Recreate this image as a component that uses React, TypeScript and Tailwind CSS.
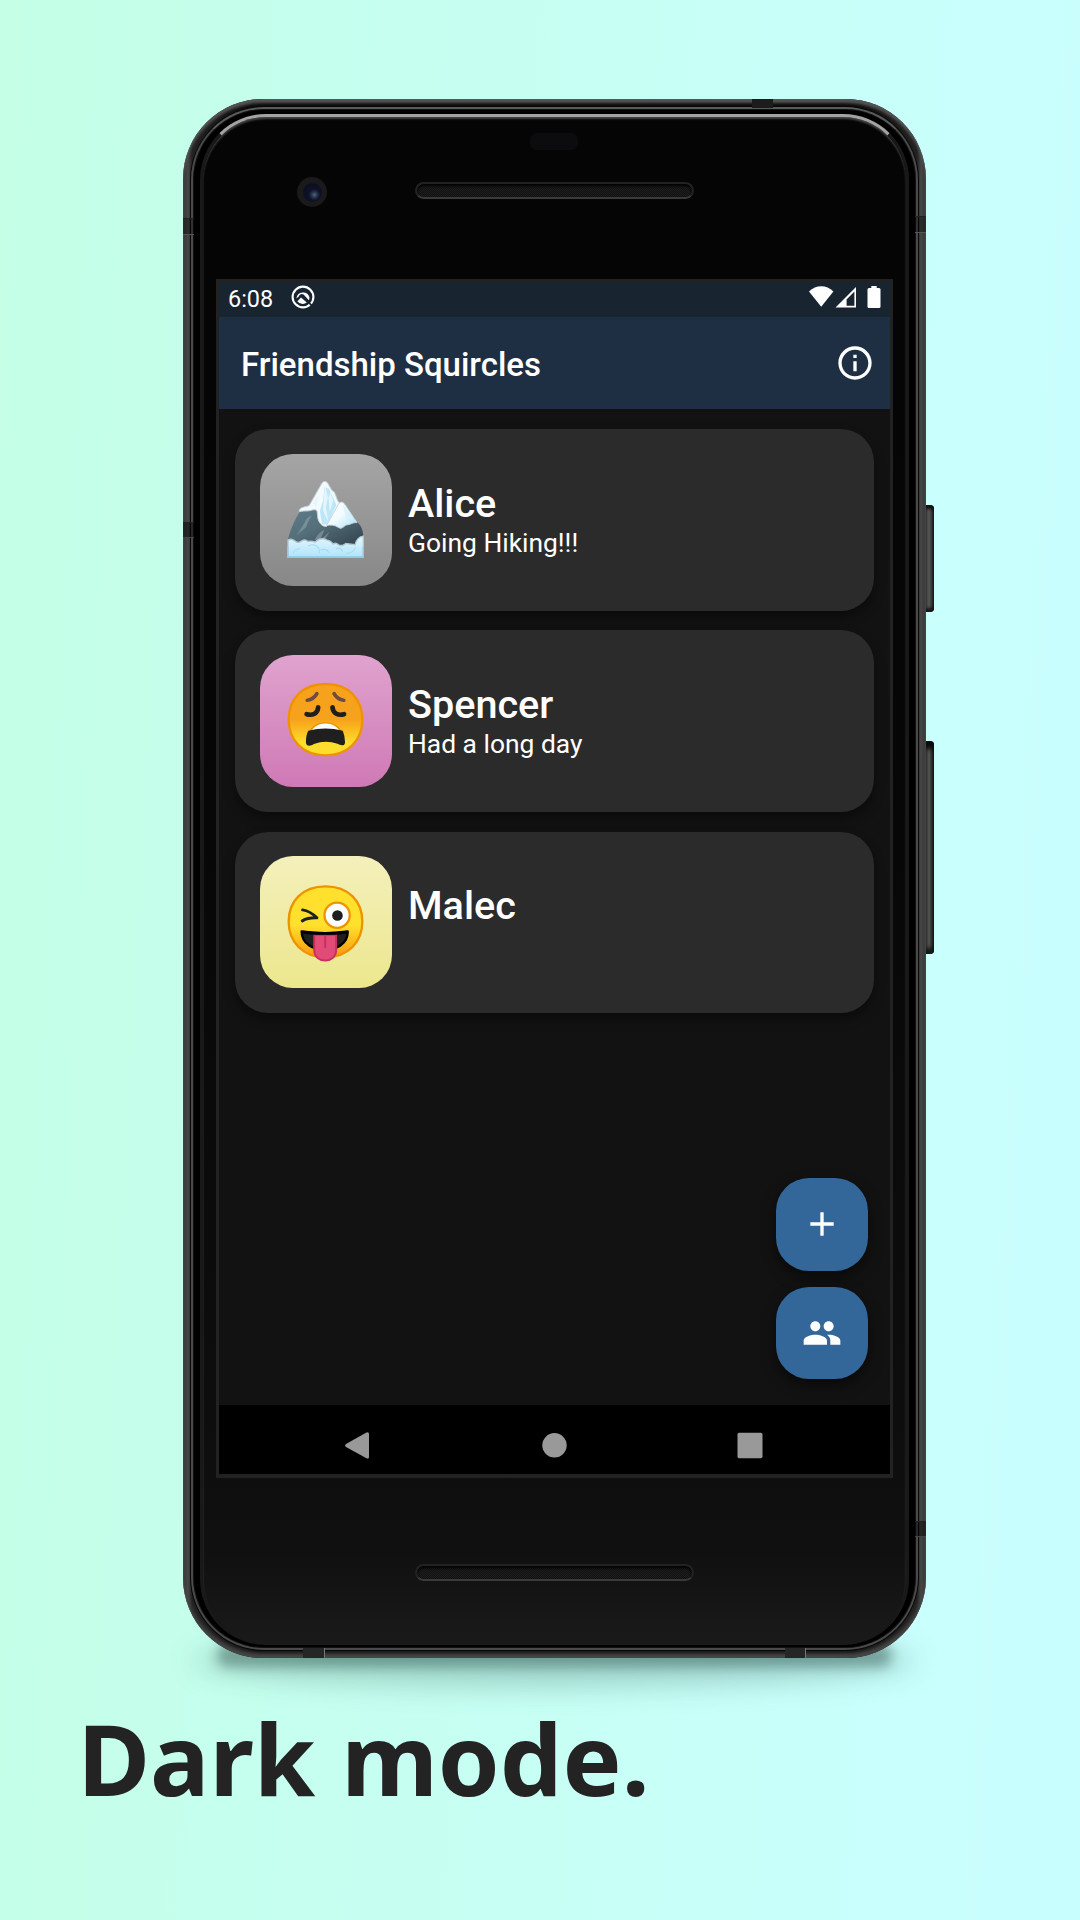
import React from "react";

function StudioIcon() {
  return (
    <svg viewBox="0 0 24 24" className="h-6 w-6" fill="none">
      <circle cx="12" cy="12" r="10.4" stroke="#fff" strokeWidth="2.1" />
      <path d="M5.4 13.4 A6.7 6.7 0 0 1 18.5 12.4 Q18.5 14 17.8 15.2 L12.6 9.6 C10.6 8.2 8.4 9.4 7.8 11.4 Z" fill="#fff" />
      <path d="M6.4 16.2 L10 12.6 L15.8 17.6 A6.8 6.8 0 0 1 6.4 16.2 Z" fill="#fff" />
      <path d="M11.2 11 L20.6 20.4" stroke="#182430" strokeWidth="1.7" />
    </svg>
  );
}

function Mountain() {
  return (
    <svg viewBox="0 0 230 232" className="h-[77px] w-[77px]">
      <defs>
        <linearGradient id="rock" x1="0" y1="0" x2="1" y2="1">
          <stop offset="0" stopColor="#607d8b" />
          <stop offset=".45" stopColor="#546e7a" />
          <stop offset="1" stopColor="#2f4049" />
        </linearGradient>
        <linearGradient id="ice" x1="0" y1="0" x2="0" y2="1">
          <stop offset="0" stopColor="#e4f6fd" />
          <stop offset="1" stopColor="#b0e4fa" />
        </linearGradient>
        <linearGradient id="peak" x1="0" y1="0" x2="1" y2="1">
          <stop offset="0" stopColor="#fff" />
          <stop offset=".5" stopColor="#f2fbff" />
          <stop offset="1" stopColor="#a5e0fa" />
        </linearGradient>
      </defs>
      <path d="M2 176 C8 150 22 116 38 92 L92 80 L115 130 L208 122 C220 130 230 146 229 176 L229 196 L2 196 Z" fill="url(#rock)" />
      <path d="M36 92 C34 78 58 78 66 74 L104 7 Q113 -5 122 7 L134 28 L142 34 L152 60 L166 76 L150 90 L118 137 C104 138 94 124 92 112 L90 94 C90 82 74 88 64 90 Q48 90 36 92Z" fill="#f3fafd" stroke="#c2d0d6" strokeWidth="3" />
      <path d="M112 18 L108 58 L98 90 L104 130 L120 132 L148 72 L126 24Z" fill="#bde6f9" />
      <path d="M114 12 L122 50 L116 80 L124 124 L108 90 L110 50Z M130 34 L138 60 L128 92 L124 50Z M78 66 L92 44 L88 80Z" fill="#e4f6fd" />
      <path d="M118 134 L154 70 Q163 57 173 70 L202 114 L210 125 C196 124 190 132 180 132 C172 132 166 148 154 140 C142 132 132 132 118 134Z" fill="url(#peak)" stroke="#c2d8e2" strokeWidth="3" />
      <path d="M166 68 L198 114 L180 120Z" fill="#d2effc" opacity=".7" />
      <path d="M52 126 Q58 108 74 104 Q62 120 56 140 Q42 150 28 164Z M82 178 Q92 156 112 146 L100 176Z M106 172 L128 152 L112 178Z" fill="#8da2ab" opacity=".6" />
      <path d="M2 178 Q12 172 22 180 Q32 190 44 180 Q54 174 62 182 Q74 180 84 184 Q100 168 120 178 Q132 180 138 190 Q146 184 154 192 Q164 198 176 188 Q190 190 204 192 Q210 168 229 166 L229 230 L2 230Z" fill="url(#ice)" stroke="#b3c6ce" strokeWidth="4" />
      <path d="M18 218 Q20 206 38 204 M62 196 Q84 186 94 202 M94 200 Q98 212 96 218 M100 208 Q118 202 126 216 M146 204 Q160 198 166 212 M178 218 Q198 218 206 200" fill="none" stroke="#a3dcf4" strokeWidth="3.5" />
      <path d="M1 198 V229 H229 V198" fill="none" stroke="#8fc9e2" strokeWidth="4" />
    </svg>
  );
}

function Weary() {
  return (
    <svg viewBox="0 0 230 232" className="h-[77px] w-[77px]">
      <defs>
        <linearGradient id="weary" x1="0" y1="0" x2="0" y2="1">
          <stop offset=".5" stopColor="#f7a21c" />
          <stop offset=".62" stopColor="#fab720" />
          <stop offset=".82" stopColor="#fede2d" />
        </linearGradient>
      </defs>
      <path d="M115 6 C185 6 226 51 226 114 C226 175 184 221 115 221 C46 221 4 175 4 114 C4 51 45 6 115 6Z" fill="url(#weary)" stroke="#ee9300" strokeWidth="7" />
      <path d="M60 55 Q80 52 89 35" stroke="#6d4c41" strokeWidth="11" strokeLinecap="round" fill="none" />
      <path d="M141 35 Q150 52 170 55" stroke="#6d4c41" strokeWidth="11" strokeLinecap="round" fill="none" />
      <path d="M58 97 C76 102 92 95 93 76 M171 97 C154 102 137 95 136 76" stroke="#1f1f1f" strokeWidth="14" strokeLinecap="round" fill="none" />
      <path d="M64 154 C76 110 154 110 166 154" fill="#ee9300" />
      <path d="M71 152 C84 116 146 116 159 152Z" fill="#fff" />
      <path d="M63 147 Q115 133 167 147 Q174 164 174 182 C173 194 160 191 151 186 Q115 174 80 187 C69 194 57 194 56 182 Q56 160 63 147Z" fill="#1f1f1f" />
    </svg>
  );
}

function Zany() {
  return (
    <svg viewBox="0 0 230 232" className="h-[77px] w-[77px]">
      <defs>
        <linearGradient id="zany" x1="0" y1="0" x2="0" y2="1">
          <stop offset=".55" stopColor="#ffe02d" />
          <stop offset=".75" stopColor="#fcc21b" />
          <stop offset="1" stopColor="#f6941d" />
        </linearGradient>
      </defs>
      <path d="M115 4 C185 4 226 49 226 110 C226 171 184 218 115 218 C46 218 4 171 4 110 C4 49 45 4 115 4Z" fill="url(#zany)" stroke="#ee9300" strokeWidth="7" />
      <circle cx="150" cy="91" r="38" fill="#fff" stroke="#ee9300" strokeWidth="7" />
      <circle cx="151" cy="92" r="16" fill="#1f1f1f" />
      <path d="M46 75 Q68 78 89 99 Q62 98 45 108" fill="none" stroke="#1f1f1f" strokeWidth="9" strokeLinecap="round" strokeLinejoin="round" />
      <path d="M43 140 Q115 150 182 140 C183 214 44 214 43 140Z" fill="#1f1f1f" stroke="#000" strokeWidth="7" strokeLinejoin="round" />
      <path d="M81 150 H147 V196 C147 238 81 238 81 196Z" fill="#e24b78" stroke="#c9305c" strokeWidth="6" />
      <path d="M46 142 Q115 151 180 142" stroke="#000" strokeWidth="9" fill="none" />
      <path d="M114 150 V190" stroke="#c4335b" strokeWidth="6" />
    </svg>
  );
}

const friends = [
  { name: "Alice", status: "Going Hiking!!!", art: <Mountain />, tile: "from-[#a5a5a5] to-[#888888]" },
  { name: "Spencer", status: "Had a long day", art: <Weary />, tile: "from-[#dfa3ce] to-[#cf79b6]" },
  { name: "Malec", status: "", art: <Zany />, tile: "pt-[3px] from-[#f4f0bb] to-[#ece78d]" },
];

function StatusBar() {
  return (
    <div className="flex h-[35px] items-center bg-[#182430] pl-[9px] pr-[9px] text-white">
      <span className="text-[23.4px] leading-none">6:08</span>
      <span className="-mt-[5px] ml-[18px]"><StudioIcon /></span>
      <svg viewBox="0 0 72 22" className="mb-[6px] ml-auto h-[22px] w-[72px]">
        <path d="M0 5.5 C7-1.6 17.5-1.6 24.4 5.5 L12.2 20.7Z" fill="#fff" />
        <path d="M26.5 21.4 L47 1 V21.4Z" fill="#fff" />
        <path d="M37.6 13.4 L45.4 5.6 V19.8 H37.6Z" fill="#182430" />
        <rect x="58.5" y="2" width="13" height="20" rx="1.5" fill="#fff" />
        <rect x="62.3" y="0" width="5.4" height="3" fill="#fff" />
      </svg>
    </div>
  );
}

function AppBar() {
  return (
    <div className="flex h-[92px] items-center justify-between bg-[#1e2f44] pl-[22px] pr-[15.5px] text-white">
      <h1 className="pt-[3px] text-[33px] font-medium leading-none">Friendship Squircles</h1>
      <svg viewBox="0 0 24 24" className="h-10 w-10" fill="#fff">
        <path d="M11 7h2v2h-2zm0 4h2v6h-2zm1-9C6.48 2 2 6.48 2 12s4.48 10 10 10 10-4.48 10-10S17.52 2 12 2zm0 18c-4.41 0-8-3.59-8-8s3.59-8 8-8 8 3.59 8 8-3.59 8-8 8z" />
      </svg>
    </div>
  );
}

function Screen() {
  return (
    <div className="mx-auto flex h-[1199px] w-[677px] flex-col border-[3px] border-b-4 border-[#222222] bg-[#121212]">
      <StatusBar />
      <AppBar />
      <div className="relative h-[996px] px-4 pt-5">
        <div className="flex flex-col gap-[19.7px]">
          {friends.map((f) => (
            <div key={f.name} className="flex h-[181.6px] rounded-[33px] bg-[#2b2b2b] pl-[24.5px] pt-[24.5px] shadow-[0_6px_12px_rgba(0,0,0,0.4)]">
              <div className={"flex h-[132px] w-[132px] items-center justify-center rounded-[33px] bg-linear-to-b pr-px " + f.tile}>
                {f.art}
              </div>
              <div className="ml-[16.5px] pt-[26px] text-white">
                <div className="text-[39.6px] font-medium leading-[47px]">{f.name}</div>
                <div className="text-[26.4px] leading-[32px]">{f.status}</div>
              </div>
            </div>
          ))}
        </div>
        <div className="absolute bottom-[26px] right-[22px] flex flex-col gap-4">
          <button className="flex h-[92.5px] w-[92.5px] items-center justify-center rounded-[33px] bg-[#336699] shadow-[0_6px_14px_rgba(0,0,0,0.5)]">
            <svg viewBox="0 0 24 24" className="h-10 w-10" fill="#fff"><path d="M19 13h-6v6h-2v-6H5v-2h6V5h2v6h6v2z" /></svg>
          </button>
          <button className="flex h-[92.5px] w-[92.5px] items-center justify-center rounded-[33px] bg-[#336699] shadow-[0_6px_14px_rgba(0,0,0,0.5)]">
            <svg viewBox="0 0 24 24" className="h-10 w-10" fill="#fff"><path d="M16 11c1.66 0 2.99-1.34 2.99-3S17.66 5 16 5c-1.66 0-3 1.34-3 3s1.34 3 3 3zm-8 0c1.66 0 2.99-1.34 2.99-3S9.66 5 8 5C6.34 5 5 6.34 5 8s1.34 3 3 3zm0 2c-2.33 0-7 1.17-7 3.5V19h14v-2.5c0-2.33-4.67-3.5-7-3.5zm8 0c-.29 0-.62.02-.97.05 1.16.84 1.97 1.97 1.97 3.45V19h6v-2.5c0-2.33-4.67-3.5-7-3.5z" /></svg>
          </button>
        </div>
      </div>
      <div className="flex h-[69px] items-center bg-black pl-[126px] pt-[11px]">
        <svg viewBox="0 0 418 27" className="h-[27px] w-[418px]" fill="#999">
          <path d="M1 12 L21 0.7 Q24 -0.5 24 2 V25 Q24 27.5 21 26 L1 15 Q-0.8 13.5 1 12Z" />
          <circle cx="209.5" cy="13.3" r="12.2" />
          <rect x="392.5" y="0.8" width="25" height="25.4" rx="1.6" />
        </svg>
      </div>
    </div>
  );
}

function Speaker() {
  return (
    <div className="h-[17px] w-[279px] rounded-full border-2 border-[#222222] border-b-[#3a3a3a] bg-[repeating-conic-gradient(#1e1e1e_0_25%,#111111_0_50%)] bg-[length:2px_2px] shadow-[inset_0_2px_3px_#000]" />
  );
}

export default function App() {
  return (
    <div className="h-[1920px] w-[1080px] overflow-hidden bg-[linear-gradient(93deg,#c4ffe6_0%,#c5ffed_25%,#c7fff5_55%,#c9fffb_78%,#c9feff_100%)] pt-[99px] font-[Roboto,sans-serif]">
      <div className="relative ml-[183px] h-[1559px] w-[743px]">
        <div className="absolute bottom-[-28px] left-[10px] h-[50px] w-[723px] rounded-[50%] bg-[#1c4a44]/25 blur-[14px]" />
        <div className="absolute bottom-[-9px] left-[34px] h-[24px] w-[675px] rounded-full bg-[#24403d]/40 blur-[6px]" />
        <div className="absolute left-[741px] top-[406px] h-[107px] w-[10px] rounded-r-[4px] bg-linear-to-r from-[#2a2a2a] via-[#565656] to-[#222] shadow-[inset_0_4px_3px_#111,inset_0_-4px_3px_#181818]" />
        <div className="absolute left-[741px] top-[642px] h-[213px] w-[10px] rounded-r-[4px] bg-linear-to-r from-[#2a2a2a] via-[#565656] to-[#222] shadow-[inset_0_8px_4px_#0c0c0c,inset_0_-6px_4px_#181818]" />
        <div className="relative h-full rounded-[80px] bg-[linear-gradient(90deg,#303030_0,#484848_5px,#222_9px,#0c0c0c_70px,#0c0c0c_673px,#222_734px,#484848_738px,#303030_743px)] p-[8px] shadow-[inset_0_4px_3px_#555,inset_0_-5px_4px_#484848]">
          <div className="h-full rounded-[73px] border-2 border-[#4a4a4a] border-t-[#5a5a5a] bg-black px-[7px] pb-[3px] pt-[5px] shadow-[0_0_0_1px_#080808,inset_0_0_0_1px_#111]">
            <div className="h-full rounded-[66px] border-x-[3px] border-t-[3px] border-x-[#191919] border-t-[#a3a3a3] bg-[linear-gradient(180deg,#050505_0%,#060606_40%,#0d0d0d_85%,#101010_94%,#1a1a1a_100%)] shadow-[inset_0_2px_2px_#444]">
              <div className="relative flex h-[162px] justify-center pt-[65px]">
                <Speaker />
                <div className="absolute left-[327px] top-[16px] h-[17px] w-[48px] rounded-[7px] bg-[#0c0c0f]" />
                <div className="absolute left-[94px] top-[60px] flex h-[30px] w-[30px] items-center justify-center rounded-full bg-[#1a1a1a]">
                  <div className="h-[19px] w-[19px] rounded-full bg-[radial-gradient(circle_at_60%_62%,#52647a_0,#283850_16%,#0f1228_34%,#090b1a_100%)]" />
                </div>
              </div>
              <Screen />
              <div className="flex justify-center pt-[86px]">
                <Speaker />
              </div>
            </div>
          </div>
        </div>
        <div className="absolute left-0 top-[119px] h-[17px] w-[11px] border-y border-b-[#555] border-t-[#222] bg-black/35" />
        <div className="absolute left-0 top-[423px] h-[16px] w-[11px] border-y border-b-[#444] border-t-[#222] bg-black/45" />
        <div className="absolute right-0 top-[117px] h-[17px] w-[11px] border-y border-b-[#555] border-t-[#222] bg-black/35" />
        <div className="absolute right-0 top-[1422px] h-[16px] w-[11px] border-y border-b-[#444] border-t-[#222] bg-black/45" />
        <div className="absolute left-[569px] top-0 h-[9px] w-[21px] bg-[#1c1c1c]" />
        <div className="absolute bottom-0 left-[120px] h-[10px] w-[22px] border-r border-r-[#777] bg-[#262626]" />
        <div className="absolute bottom-0 left-[602px] h-[10px] w-[21px] border-r border-r-[#777] bg-[#262626]" />
      </div>
      <p className="relative ml-[77.5px] mt-[32px] font-['Noto_Sans',sans-serif] text-[99.2px] font-bold leading-[136px] text-[#232323]">Dark mode.</p>
    </div>
  );
}
